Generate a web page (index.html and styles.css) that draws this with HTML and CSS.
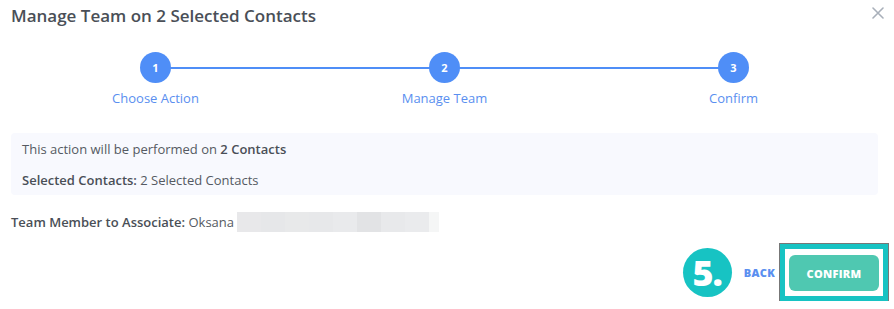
FILE: index.html
```html
<!DOCTYPE html>
<html lang="en">
<head>
    <meta charset="UTF-8">
    <title>Manage Team</title>
    <link rel="stylesheet" href="styles.css">
</head>
<body>

<div class="modal">
    <div class="modal-header">
        <h1>Manage Team on 2 Selected Contacts</h1>
        <span class="close-btn">
            <svg width="12" height="12" viewBox="0 0 12 12"><path d="M1 1L11 11M11 1L1 11" stroke="#a9b0ba" stroke-width="1.6" stroke-linecap="round"/></svg>
        </span>
    </div>

    <div class="steps">
        <div class="step-line"></div>
        <div class="step">
            <div class="step-dot">1</div>
            <div class="step-label">Choose Action</div>
        </div>
        <div class="step">
            <div class="step-dot">2</div>
            <div class="step-label">Manage Team</div>
        </div>
        <div class="step">
            <div class="step-dot">3</div>
            <div class="step-label">Confirm</div>
        </div>
    </div>

    <div class="info-box">
        <p>This action will be performed on <b>2 Contacts</b></p>
        <p><b>Selected Contacts:</b> 2 Selected Contacts</p>
    </div>

    <div class="member-row">
        <b>Team Member to Associate:</b>&nbsp;Oksana
        <span class="blurred">
            <i style="background:#e8e8ea"></i><i style="background:#e6e7e9"></i><i style="background:#e8e9ea"></i><i style="background:#e7e8ea"></i><i style="background:#e9eaec"></i><i style="background:#e2e3e5"></i><i style="background:#e8e9eb"></i><i style="background:#eaebed"></i><i class="last" style="background:#f5f6f6"></i>
        </span>
    </div>

    <div class="modal-footer">
        <span class="badge">5.</span>
        <button class="back-btn">BACK</button>
        <div class="highlight">
            <button class="confirm-btn">CONFIRM</button>
        </div>
    </div>
</div>

</body>
</html>
```

FILE: styles.css
```css
/* Page */
body {
    margin: 0;
    background: #fff;
    font-family: 'Open Sans', 'Lato', sans-serif;
    color: #4a4f57;
}

.modal {
    width: 867px;
    padding: 0 11px;
}

/* Header */
.modal-header {
    display: flex;
    justify-content: space-between;
    align-items: center;
    height: 30px;
}

.modal-header h1 {
    margin: 0;
    font-size: 17px;
    font-weight: 600;
    color: #4a4f57;
}

.close-btn {
    display: flex;
    margin-right: -6px;
    margin-top: -4px;
}

/* Steps */
.steps {
    position: relative;
    display: grid;
    grid-template-columns: repeat(3, 1fr);
    margin-top: 22px;
}

.step-line {
    position: absolute;
    left: 144px;
    right: 144px;
    top: 15px;
    height: 1.5px;
    background: #4f8ef7;
}

.step {
    position: relative;
    display: flex;
    flex-direction: column;
    align-items: center;
}

.step-dot {
    width: 31px;
    height: 31px;
    border-radius: 50%;
    background: #4f8ef7;
    color: #fff;
    font-size: 11px;
    font-weight: 700;
    display: flex;
    align-items: center;
    justify-content: center;
}

.step-label {
    margin-top: 6px;
    font-size: 13px;
    color: #5a8ff0;
}

/* Info box */
.info-box {
    margin-top: 26px;
    background: #f8f9fe;
    border-radius: 4px;
    padding: 8px 11px 7px;
    font-size: 13px;
    color: #555a62;
}

.info-box p {
    margin: 0;
    line-height: 16px;
}

.info-box p + p {
    margin-top: 15px;
}

.info-box b {
    font-weight: 600;
    color: #4a4f57;
}

/* Team member */
.member-row {
    display: flex;
    align-items: center;
    margin-top: 17px;
    font-size: 13px;
    color: #555a62;
}

.member-row b {
    font-weight: 600;
    color: #4a4f57;
}

.blurred {
    display: flex;
    margin-left: 3px;
    height: 20px;
}

.blurred i {
    width: 24px;
}

.blurred i.last {
    width: 10px;
}

/* Footer */
.modal-footer {
    display: flex;
    justify-content: flex-end;
    align-items: center;
    margin-top: 12px;
    margin-right: -10px;
}

.badge {
    width: 49px;
    height: 49px;
    border-radius: 50%;
    background: #17c3c3;
    color: #fff;
    font-size: 36px;
    font-weight: 800;
    display: flex;
    align-items: center;
    justify-content: center;
    letter-spacing: -1px;
}

.back-btn {
    border: none;
    background: none;
    padding: 0;
    margin: 0 5px 0 12px;
    font-family: inherit;
    font-size: 11px;
    font-weight: 800;
    color: #5a8ff0;
    letter-spacing: 0.3px;
}

.highlight {
    border: 5px solid #17c3c3;
    box-shadow: 0 0 0 1px #777;
    padding: 6px 4px 5px 4px;
    background: #fff;
}

.confirm-btn {
    width: 90px;
    height: 36px;
    border: none;
    border-radius: 6px;
    background: #4fc8b1;
    color: #fff;
    font-family: inherit;
    font-size: 11px;
    font-weight: 800;
    letter-spacing: 0.3px;
}
```
